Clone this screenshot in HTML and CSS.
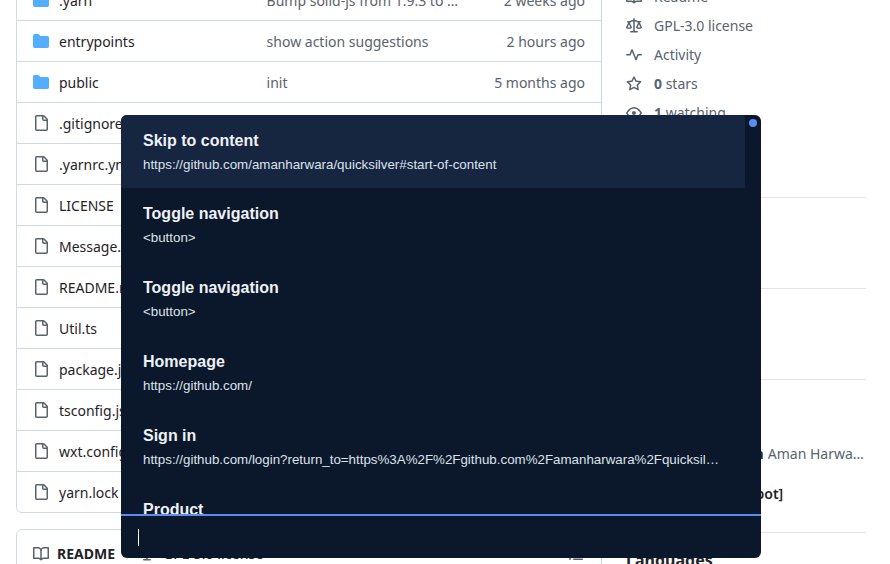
FILE: index.html
```html
<!DOCTYPE html>
<html lang="en">
<head>
    <meta charset="UTF-8">
    <meta name="viewport" content="width=device-width, initial-scale=1.0">
    <title>quicksilver</title>
    <link rel="stylesheet" href="styles.css">
</head>
<body>
    <svg class="sprite" xmlns="http://www.w3.org/2000/svg">
        <symbol id="i-folder" viewBox="0 0 16 16"><path d="M1.75 1A1.75 1.75 0 0 0 0 2.75v10.5C0 14.216.784 15 1.75 15h12.5A1.75 1.75 0 0 0 16 13.25v-8.5A1.75 1.75 0 0 0 14.25 3H7.5a.25.25 0 0 1-.2-.1l-.9-1.2C6.07 1.26 5.55 1 5 1H1.75Z"/></symbol>
        <symbol id="i-file" viewBox="0 0 16 16"><path d="M2 1.75C2 .784 2.784 0 3.75 0h6.586c.464 0 .909.184 1.237.513l2.914 2.914c.329.328.513.773.513 1.237v9.586A1.75 1.75 0 0 1 13.25 16h-9.5A1.75 1.75 0 0 1 2 14.25Zm1.75-.25a.25.25 0 0 0-.25.25v12.5c0 .138.112.25.25.25h9.5a.25.25 0 0 0 .25-.25V6h-2.75A1.75 1.75 0 0 1 9 4.25V1.5Zm6.75.062V4.25c0 .138.112.25.25.25h2.688l-.011-.013-2.914-2.914-.013-.011Z"/></symbol>
        <symbol id="i-book" viewBox="0 0 16 16"><path d="M0 1.75A.75.75 0 0 1 .75 1h4.253c1.227 0 2.317.59 3 1.501A3.743 3.743 0 0 1 11.006 1h4.245a.75.75 0 0 1 .75.75v10.5a.75.75 0 0 1-.75.75h-4.507a2.25 2.25 0 0 0-1.591.659l-.622.621a.75.75 0 0 1-1.06 0l-.622-.621A2.25 2.25 0 0 0 5.258 13H.75a.75.75 0 0 1-.75-.75Zm7.251 10.324.004-5.073-.002-2.253A2.25 2.25 0 0 0 5.003 2.5H1.5v9h3.757a3.75 3.75 0 0 1 1.994.574ZM8.755 4.75l-.004 7.322a3.752 3.752 0 0 1 1.992-.572H14.5v-9h-3.495a2.25 2.25 0 0 0-2.25 2.25Z"/></symbol>
        <symbol id="i-law" viewBox="0 0 16 16"><path d="M8.75.75V2h.985c.304 0 .603.08.867.231l1.29.736c.038.022.08.033.124.033h2.234a.75.75 0 0 1 0 1.5h-.427l2.111 4.692a.75.75 0 0 1-.154.838l-.53-.53.529.531-.001.002-.002.002-.006.006-.006.005-.01.01-.045.04c-.21.176-.441.327-.686.45C14.556 10.78 13.88 11 13 11a4.498 4.498 0 0 1-2.023-.454 3.544 3.544 0 0 1-.686-.45l-.045-.04-.016-.015-.006-.006-.004-.004v-.001a.75.75 0 0 1-.154-.838L12.178 4.5h-.162c-.305 0-.604-.079-.868-.231l-1.29-.736a.245.245 0 0 0-.124-.033H8.75V13h2.5a.75.75 0 0 1 0 1.5h-6.5a.75.75 0 0 1 0-1.5h2.5V3.5h-.984a.245.245 0 0 0-.124.033l-1.289.737c-.265.15-.564.23-.869.23h-.162l2.112 4.692a.75.75 0 0 1-.154.838l-.53-.53.529.531-.001.002-.002.002-.006.006-.016.015-.045.04c-.21.176-.441.327-.686.45C4.556 10.78 3.88 11 3 11a4.498 4.498 0 0 1-2.023-.454 3.544 3.544 0 0 1-.686-.45l-.045-.04-.016-.015-.006-.006-.004-.004v-.001a.75.75 0 0 1-.154-.838L2.178 4.5H1.75a.75.75 0 0 1 0-1.5h2.234a.249.249 0 0 0 .125-.033l1.288-.737c.265-.15.564-.23.869-.23h.984V.75a.75.75 0 0 1 1.5 0Zm2.945 8.477c.285.135.718.273 1.305.273s1.02-.138 1.305-.273L13 6.327Zm-10 0c.285.135.718.273 1.305.273s1.02-.138 1.305-.273L3 6.327Z"/></symbol>
        <symbol id="i-pulse" viewBox="0 0 16 16"><path d="M6 2c.306 0 .582.187.696.471L10 10.731l1.304-3.26A.751.751 0 0 1 12 7h3.25a.75.75 0 0 1 0 1.5h-2.742l-1.812 4.528a.751.751 0 0 1-1.392 0L6 4.77 4.696 8.03A.75.75 0 0 1 4 8.5H.75a.75.75 0 0 1 0-1.5h2.742l1.812-4.529A.751.751 0 0 1 6 2Z"/></symbol>
        <symbol id="i-star" viewBox="0 0 16 16"><path d="M8 .25a.75.75 0 0 1 .673.418l1.882 3.815 4.21.612a.75.75 0 0 1 .416 1.279l-3.046 2.97.719 4.192a.751.751 0 0 1-1.088.791L8 12.347l-3.766 1.98a.75.75 0 0 1-1.088-.79l.72-4.194L.818 6.374a.75.75 0 0 1 .416-1.28l4.21-.611L7.327.668A.75.75 0 0 1 8 .25Zm0 2.445L6.615 5.5a.75.75 0 0 1-.564.41l-3.097.45 2.24 2.184a.75.75 0 0 1 .216.664l-.528 3.084 2.769-1.456a.75.75 0 0 1 .698 0l2.77 1.456-.53-3.084a.75.75 0 0 1 .216-.664l2.24-2.183-3.096-.45a.75.75 0 0 1-.564-.41L8 2.694Z"/></symbol>
        <symbol id="i-eye" viewBox="0 0 16 16"><path d="M8 2c1.981 0 3.671.992 4.933 2.078 1.27 1.091 2.187 2.345 2.637 3.023a1.62 1.62 0 0 1 0 1.798c-.45.678-1.367 1.932-2.637 3.023C11.67 13.008 9.981 14 8 14c-1.981 0-3.671-.992-4.933-2.078C1.797 10.83.88 9.576.43 8.898a1.62 1.62 0 0 1 0-1.798c.45-.677 1.367-1.931 2.637-3.022C4.33 2.992 6.019 2 8 2ZM1.679 7.932a.12.12 0 0 0 0 .136c.411.622 1.241 1.75 2.366 2.717C5.176 11.758 6.527 12.5 8 12.5c1.473 0 2.825-.742 3.955-1.715 1.124-.967 1.954-2.096 2.366-2.717a.12.12 0 0 0 0-.136c-.412-.621-1.242-1.75-2.366-2.717C10.824 4.242 9.473 3.5 8 3.5c-1.473 0-2.825.742-3.955 1.715-1.124.967-1.954 2.096-2.366 2.717ZM8 10a2 2 0 1 1-.001-3.999A2 2 0 0 1 8 10Z"/></symbol>
        <symbol id="i-list" viewBox="0 0 16 16"><path d="M5.75 2.5h8.5a.75.75 0 0 1 0 1.5h-8.5a.75.75 0 0 1 0-1.5Zm0 5h8.5a.75.75 0 0 1 0 1.5h-8.5a.75.75 0 0 1 0-1.5Zm0 5h8.5a.75.75 0 0 1 0 1.5h-8.5a.75.75 0 0 1 0-1.5ZM2 14a1 1 0 1 1 0-2 1 1 0 0 1 0 2Zm1-6a1 1 0 1 1-2 0 1 1 0 0 1 2 0ZM2 4a1 1 0 1 1 0-2 1 1 0 0 1 0 2Z"/></symbol>
    </svg>

    <div class="page">
        <main class="repo">
            <div class="files">
                <div class="row">
                    <svg class="icon folder"><use href="#i-folder"/></svg>
                    <span class="name">.yarn</span>
                    <span class="msg">Bump solid-js from 1.9.3 to 1.9.4 in the group</span>
                    <span class="time">2 weeks ago</span>
                </div>
                <div class="row">
                    <svg class="icon folder"><use href="#i-folder"/></svg>
                    <span class="name">entrypoints</span>
                    <span class="msg">show action suggestions</span>
                    <span class="time">2 hours ago</span>
                </div>
                <div class="row">
                    <svg class="icon folder"><use href="#i-folder"/></svg>
                    <span class="name">public</span>
                    <span class="msg">init</span>
                    <span class="time">5 months ago</span>
                </div>
                <div class="row"><svg class="icon"><use href="#i-file"/></svg><span class="name">.gitignore</span></div>
                <div class="row"><svg class="icon"><use href="#i-file"/></svg><span class="name">.yarnrc.yml</span></div>
                <div class="row"><svg class="icon"><use href="#i-file"/></svg><span class="name">LICENSE</span></div>
                <div class="row"><svg class="icon"><use href="#i-file"/></svg><span class="name">Message.ts</span></div>
                <div class="row"><svg class="icon"><use href="#i-file"/></svg><span class="name">README.md</span></div>
                <div class="row"><svg class="icon"><use href="#i-file"/></svg><span class="name">Util.ts</span></div>
                <div class="row"><svg class="icon"><use href="#i-file"/></svg><span class="name">package.json</span></div>
                <div class="row"><svg class="icon"><use href="#i-file"/></svg><span class="name">tsconfig.json</span></div>
                <div class="row"><svg class="icon"><use href="#i-file"/></svg><span class="name">wxt.config.ts</span></div>
                <div class="row"><svg class="icon"><use href="#i-file"/></svg><span class="name">yarn.lock</span></div>
            </div>

            <div class="readme">
                <div class="readme-tabs">
                    <div class="tab active"><svg class="icon"><use href="#i-book"/></svg>README</div>
                    <div class="tab"><svg class="icon"><use href="#i-law"/></svg>GPL-3.0 license</div>
                    <svg class="icon toc"><use href="#i-list"/></svg>
                </div>
            </div>
        </main>

        <aside class="sidebar">
            <section class="side-section about">
                <div class="side-item"><svg class="icon"><use href="#i-book"/></svg>Readme</div>
                <div class="side-item"><svg class="icon"><use href="#i-law"/></svg>GPL-3.0 license</div>
                <div class="side-item"><svg class="icon"><use href="#i-pulse"/></svg>Activity</div>
                <div class="side-item"><svg class="icon"><use href="#i-star"/></svg><span><b>0</b> stars</span></div>
                <div class="side-item"><svg class="icon"><use href="#i-eye"/></svg><span><b>1</b> watching</span></div>
            </section>
            <section class="side-section empty"></section>
            <section class="side-section empty"></section>
            <section class="side-section contributors">
                <div class="person"><b>amanharwara</b><span class="full-name">Aman Harwara</span></div>
                <div class="person"><b>dependabot[bot]</b></div>
            </section>
            <h3 class="side-title">Languages</h3>
        </aside>
    </div>

    <div class="palette">
        <div class="results">
            <ul class="result-list">
                <li class="result selected">
                    <div class="result-title">Skip to content</div>
                    <div class="result-sub">https://github.com/amanharwara/quicksilver#start-of-content</div>
                </li>
                <li class="result">
                    <div class="result-title">Toggle navigation</div>
                    <div class="result-sub">&lt;button&gt;</div>
                </li>
                <li class="result">
                    <div class="result-title">Toggle navigation</div>
                    <div class="result-sub">&lt;button&gt;</div>
                </li>
                <li class="result">
                    <div class="result-title">Homepage</div>
                    <div class="result-sub">https://github.com/</div>
                </li>
                <li class="result">
                    <div class="result-title">Sign in</div>
                    <div class="result-sub">https://github.com/login?return_to=https%3A%2F%2Fgithub.com%2Famanharwara%2Fquicksilver</div>
                </li>
                <li class="result">
                    <div class="result-title">Product</div>
                </li>
            </ul>
            <div class="scroll-track"><div class="scroll-thumb"></div></div>
        </div>
        <div class="prompt"><span class="caret"></span></div>
    </div>
</body>
</html>
```

FILE: styles.css
```css
body {
    margin: 0;
    height: 100vh;
    overflow: hidden;
    background: #fff;
    color: #1f2328;
    font-family: "Noto Sans", sans-serif;
    font-size: 14px;
}
.sprite {
    display: none;
}
.icon {
    width: 16px;
    height: 16px;
    flex: none;
    fill: #59636e;
}
.folder {
    fill: #54aeff;
}

.page {
    display: flex;
    gap: 24px;
    margin-top: -21px;
    padding-left: 16px;
}
.repo {
    width: 586px;
    flex: none;
}

.files {
    border: 1px solid #d1d9e0;
    border-radius: 6px;
}
.row {
    display: flex;
    align-items: center;
    height: 40px;
    padding: 0 16px;
    border-top: 1px solid #d1d9e0;
}
.row:first-child {
    border-top: none;
}
.name {
    width: 198px;
    margin-left: 10px;
    margin-right: 9.6px;
    flex: none;
}
.msg {
    width: 193px;
    flex: none;
    color: #59636e;
    white-space: nowrap;
    overflow: hidden;
    text-overflow: ellipsis;
}
.time {
    flex: 1;
    color: #59636e;
    text-align: right;
}

.readme {
    margin-top: 16px;
    border: 1px solid #d1d9e0;
    border-radius: 6px;
    height: 100px;
}
.readme-tabs {
    display: flex;
    align-items: center;
    height: 47px;
    padding: 0 17px 0 16px;
}
.tab {
    display: flex;
    align-items: center;
    gap: 8px;
    margin-right: 24px;
    font-weight: 500;
}
.tab.active {
    font-weight: 700;
}
.toc {
    margin-left: auto;
}

.sidebar {
    width: 240px;
    flex: none;
    margin-top: 3px;
}
.side-section {
    border-bottom: 1px solid #e1e4e8;
}
.about {
    padding-bottom: 70px;
}
.side-item {
    display: flex;
    align-items: center;
    gap: 12px;
    height: 29px;
    color: #59636e;
}
.empty {
    height: 90px;
}
.contributors {
    padding: 53px 0 19px;
}
.person {
    display: flex;
    align-items: center;
    gap: 4px;
    height: 40px;
    padding-left: 42px;
}
.person b {
    font-weight: 600;
}
.full-name {
    color: #59636e;
    white-space: nowrap;
    overflow: hidden;
    text-overflow: ellipsis;
}
.side-title {
    margin: 15px 0 0;
    font-size: 16px;
    line-height: 24px;
}

.palette {
    position: absolute;
    top: 115px;
    left: 121px;
    width: 640px;
    height: 443px;
    display: flex;
    flex-direction: column;
    background: #0b172a;
    border-radius: 6px;
    overflow: hidden;
    font-family: "Liberation Sans", Arial, sans-serif;
}
.results {
    display: flex;
    height: 399px;
    flex: none;
    overflow: hidden;
}
.result-list {
    flex: 1;
    min-width: 0;
    margin: 0;
    padding: 0;
    list-style: none;
}
.result {
    height: 59px;
    padding: 15px 22px 0;
}
.result.selected {
    height: 58px;
    background: #162540;
}
.result-title {
    color: #eef1f6;
    font-size: 16px;
    font-weight: 700;
    line-height: 22px;
}
.result-sub {
    margin-top: 5px;
    color: #dde2ea;
    font-size: 13.33px;
    line-height: 16px;
    white-space: nowrap;
    overflow: hidden;
    text-overflow: ellipsis;
}
.scroll-track {
    width: 16px;
    flex: none;
}
.scroll-thumb {
    width: 8px;
    height: 8px;
    margin: 4px 4px 0;
    border-radius: 50%;
    background: #5b8def;
}
.prompt {
    flex: 1;
    display: flex;
    align-items: center;
    padding-left: 17px;
    border-top: 2px solid #5b8def;
}
.caret {
    width: 1px;
    height: 17px;
    background: #fff;
}
```
